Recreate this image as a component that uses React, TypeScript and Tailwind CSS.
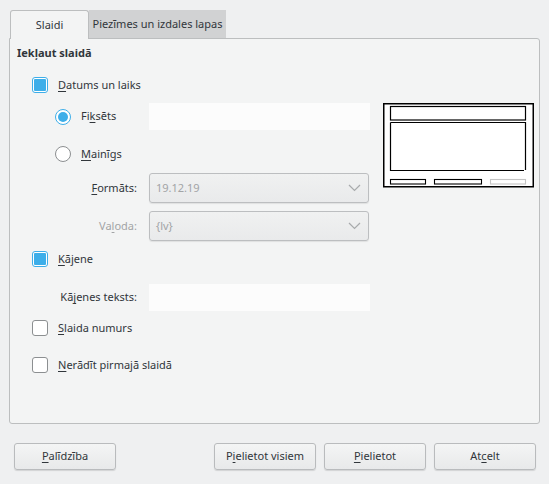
import React from "react";

function U({ children }: { children: React.ReactNode }) {
  return <span className="underline decoration-1 underline-offset-[2px]">{children}</span>;
}

function Check({ on }: { on?: boolean }) {
  return (
    <span
      className={
        "flex h-[16px] w-[16px] shrink-0 items-center justify-center rounded-[3px] border bg-white " +
        (on ? "border-[#3daee9]" : "border-[#8c8f91]")
      }
    >
      {on ? <span className="h-[12px] w-[12px] rounded-[1px] bg-[#3daee9]" /> : null}
    </span>
  );
}

function Radio({ on }: { on?: boolean }) {
  return (
    <span
      className={
        "flex h-[16px] w-[16px] shrink-0 items-center justify-center rounded-full border bg-white " +
        (on ? "border-[#3daee9]" : "border-[#8c8f91]")
      }
    >
      {on ? <span className="h-[10px] w-[10px] rounded-full bg-[#3daee9]" /> : null}
    </span>
  );
}

function Combo({ value }: { value: string }) {
  return (
    <div className="ml-[12px] flex h-[30px] w-[220px] items-center justify-between rounded-[3px] border border-[#bcbec0] bg-gradient-to-b from-[#f0f1f1] to-[#e9eaeb] pl-[6px] pr-[7px] text-[#a2a4a6] shadow-[0_1px_1px_rgba(0,0,0,0.08)]">
      <span>{value}</span>
      <svg width="13" height="8" viewBox="0 0 13 8">
        <path d="M1 1 L6.5 6.5 L12 1" fill="none" stroke="#a8aaac" strokeWidth="1.2" />
      </svg>
    </div>
  );
}

function Btn({ children, className = "" }: { children: React.ReactNode; className?: string }) {
  return (
    <div
      className={
        "flex h-[27px] w-[102px] items-center justify-center rounded-[3px] border border-[#b9bbbd] bg-gradient-to-b from-[#f4f5f5] to-[#e8e9ea] shadow-[0_1px_1px_rgba(0,0,0,0.12)] " +
        className
      }
    >
      {children}
    </div>
  );
}

function Preview() {
  return (
    <svg width="151" height="85" viewBox="0 0 151 85">
      <rect x="0.75" y="0.75" width="149.5" height="83" fill="#fff" stroke="#000" strokeWidth="1.5" />
      <rect x="7.5" y="3.5" width="135" height="13.5" fill="none" stroke="#000" strokeWidth="1.2" />
      <path d="M7.5 19.5 H142.5 V67 M141 67.5 H7.5 V19.5" fill="none" stroke="#000" strokeWidth="1.2" />
      <rect x="7.5" y="76.5" width="35" height="4.5" fill="none" stroke="#000" strokeWidth="1.1" />
      <rect x="51.5" y="76.5" width="47" height="4.5" fill="none" stroke="#000" strokeWidth="1.1" />
      <rect x="107.5" y="76.5" width="35" height="4.5" fill="none" stroke="#c4c4c4" strokeWidth="1.1" />
    </svg>
  );
}

export default function App() {
  return (
    <div
      className="h-[484px] w-[549px] bg-[#eff0f1] px-[9px] pt-[10px] text-[11px] text-[#31363b]"
      style={{ fontFamily: '"Noto Sans", "DejaVu Sans", sans-serif' }}
    >
      {/* tabs */}
      <div className="flex h-[29px] pl-[1px]">
        <div className="relative z-10 flex h-[29px] w-[79px] items-center justify-center rounded-t-[3px] border border-b-0 border-[#bcbebf] bg-[#f3f4f4] pt-[1px]">
          Slaidi
        </div>
        <div className="flex h-[28px] w-[137px] items-center justify-center whitespace-nowrap bg-[#d1d2d3] pt-[1px]">
          Piezīmes un izdales lapas
        </div>
      </div>

      {/* panel */}
      <div className="-mt-px flex h-[386px] w-[531px] flex-col rounded-b-[3px] rounded-tr-[3px] border border-[#bcbebf] bg-[#f3f4f4]">
        <div className="mt-[4px] flex h-[20px] items-center pl-[7px] font-bold">Iekļaut slaidā</div>

        <div className="flex">
          <div className="flex flex-col">
            <div className="mt-[12px] flex h-[20px] items-center gap-[10px] pl-[22px]">
              <Check on />
              <span>
                <U>D</U>atums un laiks
              </span>
            </div>
            <div className="mt-[8px] flex h-[27px] items-center">
              <div className="flex w-[127px] items-center gap-[10px] pl-[45px]">
                <Radio on />
                <span>
                  Fi<U>k</U>sēts
                </span>
              </div>
              <div className="ml-[12px] h-[27px] w-[221px] bg-[#fcfcfc]" />
            </div>
            <div className="mt-[14px] flex h-[20px] items-center gap-[10px] pl-[45px]">
              <Radio />
              <span>
                <U>M</U>ainīgs
              </span>
            </div>
            <div className="mt-[9px] flex h-[30px] items-center">
              <div className="w-[127px] text-right">
                <U>F</U>ormāts:
              </div>
              <Combo value="19.12.19" />
            </div>
            <div className="mt-[8px] flex h-[30px] items-center">
              <div className="w-[127px] text-right text-[#a2a4a6]">
                Va<U>l</U>oda:
              </div>
              <Combo value="{lv}" />
            </div>
          </div>
          <div className="ml-[13px] pt-[40px]">
            <Preview />
          </div>
        </div>

        <div className="mt-[8px] flex h-[20px] items-center gap-[10px] pl-[22px]">
          <Check on />
          <span>
            <U>K</U>ājene
          </span>
        </div>
        <div className="mt-[15px] flex h-[27px] items-center">
          <div className="w-[127px] text-right">
            Kā<U>j</U>enes teksts:
          </div>
          <div className="ml-[12px] h-[27px] w-[221px] bg-[#fcfcfc]" />
        </div>
        <div className="mt-[7px] flex h-[20px] items-center gap-[10px] pl-[22px]">
          <Check />
          <span>
            <U>S</U>laida numurs
          </span>
        </div>
        <div className="mt-[17px] flex h-[20px] items-center gap-[10px] pl-[22px]">
          <Check />
          <span>
            <U>N</U>erādīt pirmajā slaidā
          </span>
        </div>
      </div>

      {/* buttons */}
      <div className="mt-[19px] flex items-center pl-[5px]">
        <Btn>
          <span>
            <U>P</U>alīdzība
          </span>
        </Btn>
        <div className="ml-auto flex gap-[8px] pr-[4px]">
          <Btn>
            <span>
              P<U>i</U>elietot visiem
            </span>
          </Btn>
          <Btn>
            <span>
              <U>P</U>ielietot
            </span>
          </Btn>
          <Btn>
            <span>
              At<U>c</U>elt
            </span>
          </Btn>
        </div>
      </div>
    </div>
  );
}
